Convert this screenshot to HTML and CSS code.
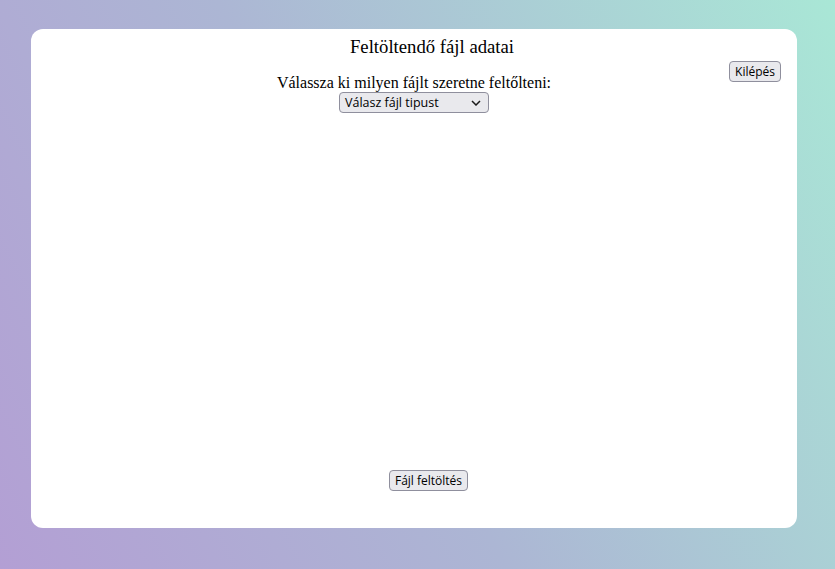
FILE: index.html
```html
<!DOCTYPE html>
<html lang="hu">
<head>
<meta charset="utf-8">
<title>Feltöltés</title>
<link rel="stylesheet" href="styles.css">
</head>
<body>
<div class="card">
  <h3 class="title">Feltöltendő fájl adatai</h3>
  <div class="top">
    <div class="spacer"></div>
    <div class="chooser">
      <div class="label">Válassza ki milyen fájlt szeretne feltőlteni:</div>
      <div class="select">
        <span>Válasz fájl tipust</span>
        <svg width="10" height="6" viewBox="0 0 10 6"><path d="M1 1 L5 5 L9 1" fill="none" stroke="#1a1a1a" stroke-width="1.5"/></svg>
      </div>
    </div>
    <div class="exit-wrap"><button class="btn">Kilépés</button></div>
  </div>
  <div class="grow"></div>
  <div class="bottom"><button class="btn">Fájl feltöltés</button></div>
</div>
</body>
</html>
```
FILE: styles.css
```css
html, body { margin: 0; height: 100%; }
body {
  background: linear-gradient(63deg, #b39fd4 0%, #acb6d4 45%, #a9e7d6 100%);
  padding: 29px 38px 41px 31px;
  box-sizing: border-box;
  font-family: "Liberation Serif", serif;
  color: #000;
}
.card {
  background: #fff;
  border-radius: 12px;
  height: 100%;
  box-sizing: border-box;
  padding: 7px 16px 37px 16px;
  display: flex;
  flex-direction: column;
}
.title {
  margin: 0;
  font-weight: normal;
  font-size: 18.72px;
  text-align: center;
  padding-left: 36px;
}
.top {
  display: grid;
  grid-template-columns: 1fr auto 1fr;
  margin-top: 3px;
}
.chooser {
  margin-top: 13px;
  display: flex;
  flex-direction: column;
  align-items: center;
  font-size: 16px;
}
.exit-wrap { display: flex; justify-content: flex-end; align-items: flex-start; }
.btn {
  font-family: "Open Sans", "Liberation Sans", sans-serif;
  font-size: 12px;
  height: 21px;
  padding: 0 5px;
  background: #e9e9ed;
  border: 1px solid #8f8f9d;
  border-radius: 4px;
  color: #000;
  line-height: 19px;
}
.select {
  width: 150px;
  height: 21px;
  box-sizing: border-box;
  border: 1px solid #8f8f9d;
  border-radius: 4px;
  background: #e9e9ed;
  font-family: "Open Sans", "Liberation Sans", sans-serif;
  font-size: 12.5px;
  display: flex;
  align-items: center;
  justify-content: space-between;
  padding: 0 7px 0 5px;
}
.grow { flex: 1; }
.bottom { display: flex; justify-content: center; padding-left: 29px; }
```
